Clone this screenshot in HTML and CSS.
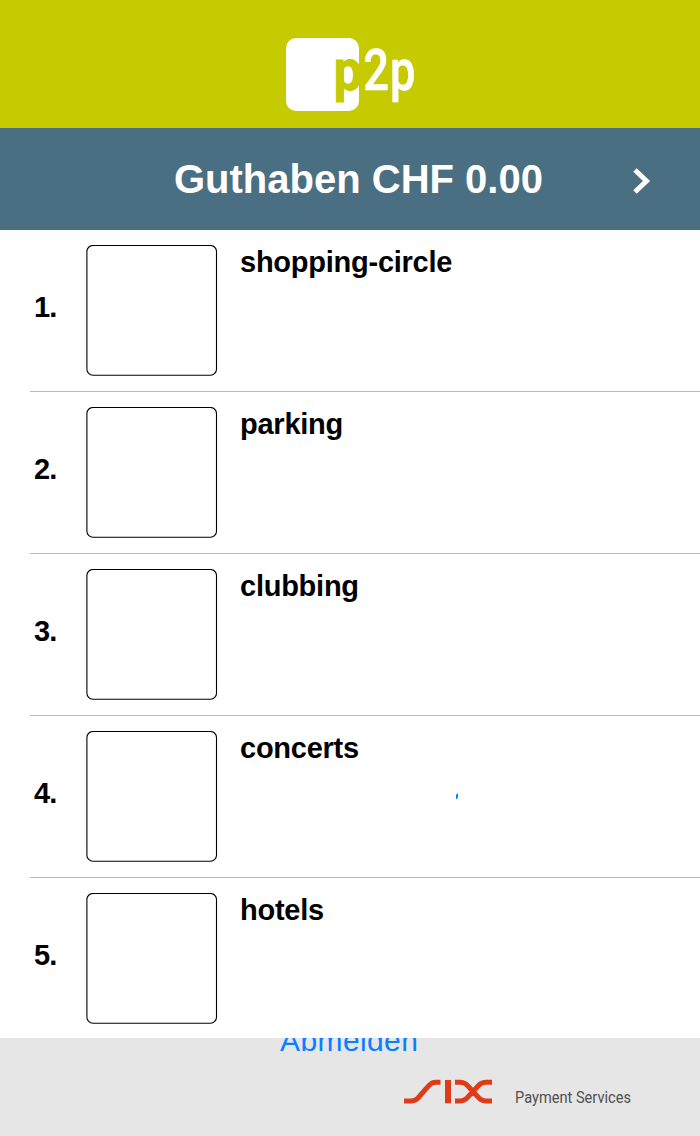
FILE: index.html
```html
<!DOCTYPE html>
<html lang="de">
<head>
<meta charset="utf-8">
<title>p2p</title>
<link rel="stylesheet" href="styles.css">
</head>
<body>
<div class="app">
  <header class="brand">
    <svg class="brand-logo" width="140" height="80" viewBox="280 34 140 80">
      <rect class="logo-square" x="286" y="38" width="73" height="73" rx="10"/>
      <text class="logo-text logo-cut" transform="translate(333.6 90) scale(.88 1)">p</text>
      <text class="logo-text logo-light" transform="translate(363.2 90) scale(.78 1)">2</text>
      <text class="logo-text logo-light" transform="translate(390 90) scale(.78 1)">p</text>
    </svg>
  </header>
  <div class="balance">
    <h1 class="balance-title">Guthaben CHF 0.00</h1>
    <svg class="chevron" width="18" height="28" viewBox="0 0 18 28"><path d="M2 3L13.500 14L2 25"/></svg>
  </div>
  <main class="list">
    <section class="row"><span class="rank">1.</span><svg class="thumb" width="132" height="132"><rect x=".9" y=".5" width="129.6" height="129.7" rx="6"/></svg><h2 class="title">shopping-circle</h2></section>
    <section class="row"><span class="rank">2.</span><svg class="thumb" width="132" height="132"><rect x=".9" y=".5" width="129.6" height="129.7" rx="6"/></svg><h2 class="title">parking</h2></section>
    <section class="row"><span class="rank">3.</span><svg class="thumb" width="132" height="132"><rect x=".9" y=".5" width="129.6" height="129.7" rx="6"/></svg><h2 class="title">clubbing</h2></section>
    <section class="row"><span class="rank">4.</span><svg class="thumb" width="132" height="132"><rect x=".9" y=".5" width="129.6" height="129.7" rx="6"/></svg><h2 class="title">concerts</h2><svg class="mark" width="2" height="6" viewBox="0 0 2 6"><path d="M2 0V4L1 6H0V2Z"/></svg></section>
    <section class="row"><span class="rank">5.</span><svg class="thumb" width="132" height="132"><rect x=".9" y=".5" width="129.6" height="129.7" rx="6"/></svg><h2 class="title">hotels</h2></section>
  </main>
  <footer class="footer">
    <a class="logout">Abmelden</a>
    <div class="provider">
      <svg class="six" width="90" height="26" viewBox="403 1079 90 26">
        <path d="M404 1101H411C414 1101 416 1100 418 1098L429 1085.500C431 1083 433 1082.200 436 1082.200H440.500M455 1082.200H460C463 1082.200 465 1083 467 1085L479 1098C481 1100 483 1101 486 1101H492M455 1101H460C463 1101 465 1100 467 1098L479 1085C481 1083 483 1082.200 486 1082.200H492"/>
        <rect class="six-bar" x="445" y="1080" width="6" height="23.300"/>
      </svg>
      <svg class="services" width="124" height="26" viewBox="514 1084 124 26"><text x="515" y="1103" textLength="116" lengthAdjust="spacingAndGlyphs">Payment Services</text></svg>
    </div>
  </footer>
</div>
</body>
</html>
```
FILE: styles.css
```css
* { box-sizing: border-box; }
body { margin: 0; font-family: "Liberation Sans", Arial, sans-serif; }
svg { display: block; flex: none; }
.app { width: 700px; height: 1136px; display: flex; flex-direction: column; overflow: hidden; background: #fff; }
.brand { height: 128px; flex: none; display: flex; justify-content: center; padding-top: 34px; background: #c5cb00; }
.logo-text { font: 500 58px Roboto, sans-serif; }
.logo-square { fill: #fff; }
.logo-light { fill: #fff; stroke: #fff; stroke-width: .6; }
.logo-cut { fill: #c5cb00; stroke: #c5cb00; stroke-width: 1; font-weight: 700; }
.balance { height: 102px; flex: none; display: flex; align-items: center; justify-content: space-between; padding: 0 49px 0 174px; background: #4a6e82; color: #fff; }
.balance-title { margin: 0; font-size: 40px; line-height: 46px; white-space: nowrap; }
.chevron { margin-top: 3px; }
.chevron path { fill: none; stroke: #fff; stroke-width: 5; }
.list { height: 808px; flex: none; overflow: hidden; }
.row { display: flex; height: 162px; margin-left: 30px; padding-top: 15px; border-bottom: 1px solid #b9b9b9; }
.row:last-child { border-bottom: 0; }
.rank { width: 56px; padding: 45px 0 0 4px; font-size: 29px; font-weight: 700; line-height: 34px; letter-spacing: -.8px; }
.thumb rect { fill: none; stroke: #000; stroke-width: 1.1; }
.title { width: 217px; margin: 0 0 0 22px; font-size: 29px; line-height: 34px; letter-spacing: -.25px; white-space: nowrap; }
.mark { margin: 62px 0 0 -1px; }
.mark path { fill: #087fff; }
.footer { height: 98px; flex: none; background: #e6e6e6; clip-path: inset(0); overflow: hidden; }
.logout { display: block; width: 145px; margin: -14px 0 0 280px; font-size: 30px; line-height: 34px; letter-spacing: .4px; color: #087fff; }
.provider { display: flex; margin: 21px 0 0 403px; gap: 21px; }
.six path { fill: none; stroke: #df3b17; stroke-width: 5; }
.six-bar { fill: #df3b17; }
.services { margin-top: 5px; }
.services text { font: 400 17px Roboto, sans-serif; fill: #505050; }
```
